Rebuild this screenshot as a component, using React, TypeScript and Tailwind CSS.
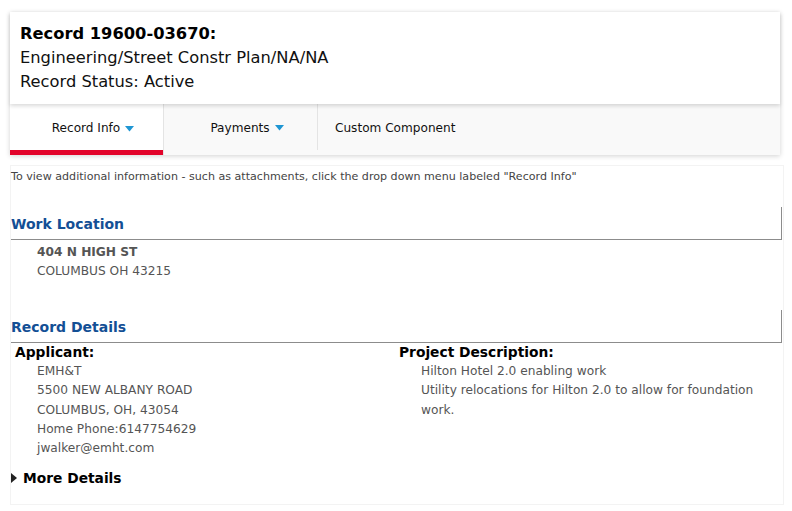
import React from 'react';

const Caret = () => (
  <svg width="9" height="6" viewBox="0 0 9 6" className="ml-[5px] inline-block">
    <path d="M0 0 L9 0 L4.5 5.5 Z" fill="#1f96d3" />
  </svg>
);

const SectionHeading: React.FC<{ title: string }> = ({ title }) => (
  <div className="mr-[1px] border-r border-b border-[#8c8c8c] h-[33px] flex items-end pb-[8px]">
    <h2 className="text-[14px] font-bold text-[#134f95] leading-none">{title}</h2>
  </div>
);

export default function App() {
  const font = { fontFamily: '"DejaVu Sans", Verdana, sans-serif' };
  return (
    <div className="w-[792px] h-[511px] bg-white overflow-hidden pt-[12px] pl-[10px]" style={font}>
      {/* Record header */}
      <div className="w-[770px] shadow-[0_1px_5px_rgba(0,0,0,0.18)]">
        <div className="bg-white px-[10px] pt-[10px] pb-[10px] relative z-10 shadow-[0_2px_4px_rgba(0,0,0,0.15)]">
          <div className="text-[16.3px] font-bold text-black leading-[24px]">Record 19600-03670:</div>
          <div className="text-[16.3px] text-[#111] leading-[24px]">Engineering/Street Constr Plan/NA/NA</div>
          <div className="text-[16.3px] text-[#111] leading-[24px]">Record Status: Active</div>
        </div>
        <div className="flex bg-[#f9f9f9] h-[51px] text-[12.1px] text-[#111]">
          <div className="w-[153px] bg-white border-b-[5px] border-[#e2032a] flex items-center justify-center pl-[13px] pt-[3px]">
            <span>Record Info</span>
            <Caret />
          </div>
          <div className="w-[154px] border-l border-[#e4e4e4] flex items-center justify-center pl-[13px] pb-[3px]">
            <span>Payments</span>
            <Caret />
          </div>
          <div className="border-l border-[#e4e4e4] mb-[5px] flex items-center pl-[17px] pt-[2px]">
            <span>Custom Component</span>
          </div>
        </div>
      </div>

      {/* Content */}
      <div className="w-[774px] mt-[10px] border border-[#f3f3f3] h-[340px]">
        <p className="text-[11.1px] text-[#444] leading-[18px] pt-[2px]">
          To view additional information - such as attachments, click the drop down menu labeled "Record Info"
        </p>

        <div className="mt-[21px]">
          <SectionHeading title="Work Location" />
          <div className="pl-[26px] pt-[3px] text-[12.2px] text-[#555] leading-[19px]">
            <div className="font-bold">404 N HIGH ST</div>
            <div>COLUMBUS OH 43215</div>
          </div>
        </div>

        <div className="mt-[29px]">
          <SectionHeading title="Record Details" />
          <div className="grid grid-cols-[384px_1fr] pl-[4px]">
            <div>
              <div className="text-[13.8px] font-bold text-black leading-[18px]">Applicant:</div>
              <div className="pl-[22px] pt-[1px] text-[12.2px] text-[#555] leading-[19.25px]">
                <div>EMH&amp;T</div>
                <div>5500 NEW ALBANY ROAD</div>
                <div>COLUMBUS, OH, 43054</div>
                <div>Home Phone:6147754629</div>
                <div>jwalker@emht.com</div>
              </div>
            </div>
            <div>
              <div className="text-[13.8px] font-bold text-black leading-[18px]">Project Description:</div>
              <div className="pl-[22px] pt-[1px] text-[12.2px] text-[#555] leading-[19.25px]">
                <div>Hilton Hotel 2.0 enabling work</div>
                <div>Utility relocations for Hilton 2.0 to allow for foundation work.</div>
              </div>
            </div>
          </div>
          <div className="flex items-center mt-[11px]">
            <svg width="6" height="10" viewBox="0 0 6 10" className="mr-[6px]">
              <path d="M0 0 L6 5 L0 10 Z" fill="#222" />
            </svg>
            <span className="text-[13.8px] font-bold text-black leading-[18px]">More Details</span>
          </div>
        </div>
      </div>
    </div>
  );
}
